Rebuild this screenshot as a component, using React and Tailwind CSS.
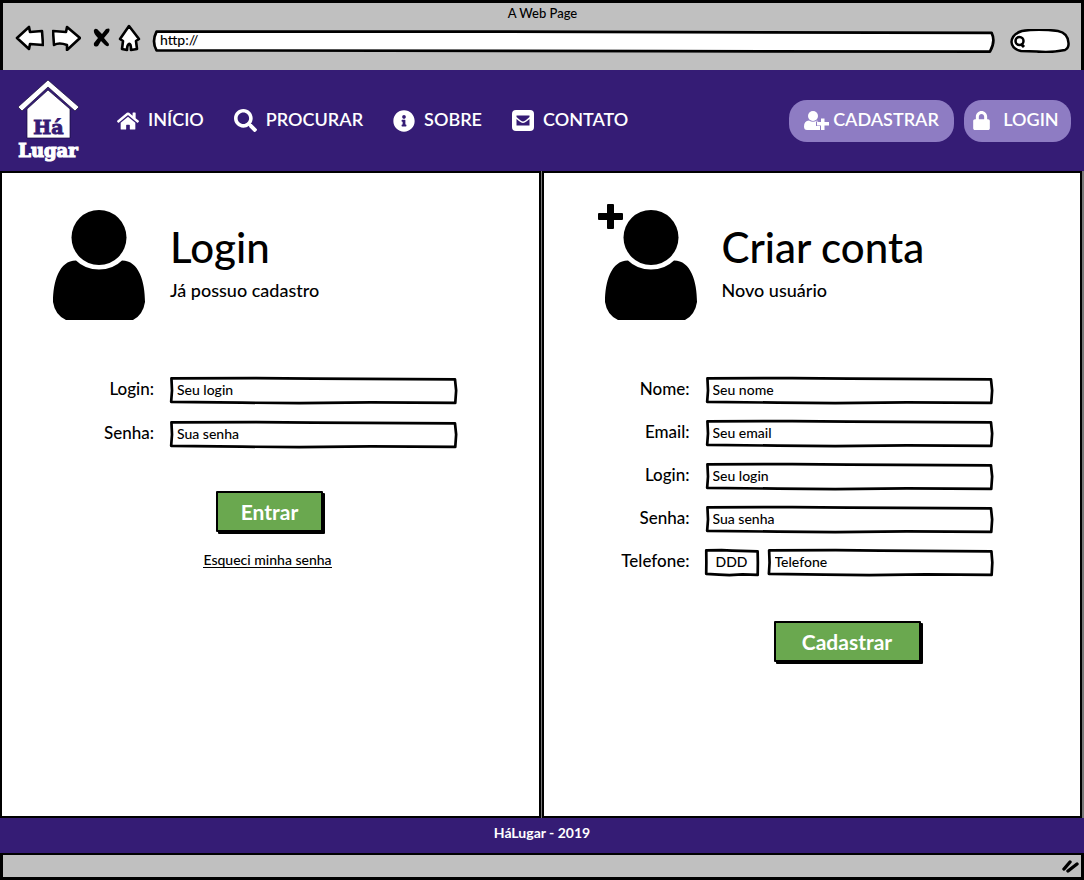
import React from "react";
import { FaHome, FaInfoCircle, FaLock, FaSearch } from "react-icons/fa";

function SketchFrame({ tilt = false }) {
  return (
    <svg
      className="pointer-events-none absolute inset-0 h-full w-full overflow-visible"
      viewBox="0 0 100 100"
      preserveAspectRatio="none"
      aria-hidden="true"
    >
      <path
        d={
          tilt
            ? "M.3 3 L40 3 L99.6 9 Q100.1 50 99.4 98 L60 96 L.3 92 Q-.3 50 .3 3 Z"
            : "M.5 5 L30 4 L50 6 L99.3 9 L99.7 50 L99.4 96 L70 94 L45 97 L25 95 L.4 92 L.7 50 Z"
        }
        fill="#fff"
        stroke="#000"
        strokeWidth="2.7"
        strokeLinejoin="round"
        vectorEffect="non-scaling-stroke"
      />
    </svg>
  );
}

function TextField({ id, placeholder, type = "text", className = "", center = false, label }) {
  return (
    <div className={"relative h-[27px] " + className}>
      <SketchFrame />
      <input
        id={id}
        type={type}
        aria-label={label}
        placeholder={placeholder}
        className={
          "relative block h-full w-full bg-transparent pb-[2px] text-sm text-black outline-none placeholder:text-black placeholder:opacity-100 " +
          (center ? "text-center" : "px-[7px]")
        }
      />
    </div>
  );
}

function Row({ id, label, children }) {
  return (
    <div className="flex items-start gap-4">
      <label htmlFor={id} className="w-[85px] shrink-0 text-right text-[17px] leading-[23px]">
        {label}
      </label>
      {children}
    </div>
  );
}

function Avatar({ plus = false }) {
  return (
    <div className="relative h-[110px] w-[92px] shrink-0">
      <svg viewBox="0 0 92 110" className="h-full w-full" aria-hidden="true">
        <circle cx="46" cy="27.5" r="27.5" />
        <path d="M23 50.500Q32 59.500 46 59.500T69 50.500C86 50.500 92 72 92 92Q90 105 80 110H13Q2 105 0 92C0 72 6 50.500 23 50.500Z" />
      </svg>
      {plus && (
        <svg viewBox="0 0 25 25" className="absolute -left-[7px] -top-[6px] h-[25px] w-[25px]" aria-hidden="true">
          <path d="M10 0h5q1 0 1 1v8h8q1 0 1 1v5q0 1-1 1h-8v8q0 1-1 1h-5q-1 0-1-1v-8H1q-1 0-1-1v-5q0-1 1-1h8V1q0-1 1-1z" />
        </svg>
      )}
    </div>
  );
}

function PanelHeading({ title, subtitle, plus }) {
  return (
    <div className="flex items-start gap-[25px]">
      <Avatar plus={plus} />
      <div className="pt-[13px]">
        <h1 className="text-[42px] leading-[48px]">{title}</h1>
        <p className="mt-[7px] text-lg leading-6">{subtitle}</p>
      </div>
    </div>
  );
}

function ActionButton({ children, className }) {
  return (
    <button
      type="submit"
      className={
        "h-[41px] rounded-[1px] border-2 border-black bg-[#6aa84f] text-[21px] font-bold text-white shadow-[2px_2px_0_#000] " +
        className
      }
    >
      {children}
    </button>
  );
}

function Logo() {
  return (
    <a href="#inicio" aria-label="Há Lugar" className="block w-[64px] shrink-0">
      <svg viewBox="0 0 64 84" className="h-[84px] w-[64px]">
        <path d="M1 28L31 1L62 28L58 32L31 8L5 32Z" fill="#fff" stroke="#160a3a" strokeWidth=".7" />
        <path d="M31 11L53 30V59H10V30Z" fill="#fff" stroke="#160a3a" strokeWidth=".7" />
        <text x="31.500" y="55" textAnchor="middle" fontFamily="DejaVu Serif, serif" fontWeight="700" fontSize="19" fill="#351c75" stroke="#351c75" strokeWidth="1">
          Há
        </text>
        <text x="31" y="78" textAnchor="middle" fontFamily="DejaVu Serif, serif" fontWeight="700" fontSize="18" fill="#fff" stroke="#fff" strokeWidth="1.200">
          Lugar
        </text>
      </svg>
    </a>
  );
}

function MailIcon() {
  return (
    <svg viewBox="0 0 22 21" className="h-[21px] w-[22px]" aria-hidden="true">
      <rect width="22" height="21" rx="4" fill="#fff" />
      <path d="M4.500 5.500h13v1.500q-5 4.500-6.500 4.500t-6.500-4.500zM4.500 9q4.500 4 6.500 4t6.500-4v6.500h-13z" fill="#351c75" />
    </svg>
  );
}

function UserPlusIcon() {
  return (
    <svg viewBox="0 0 25 19" className="h-[19px] w-[25px]" fill="#fff" aria-hidden="true">
      <circle cx="9" cy="5" r="5" />
      <path d="M5 9.500q4 2.500 8 0l1.500 1H12v4.500h4V19H3Q0 19 0 15.500Q0 10 5 9.500Z" />
      <path d="M17 7.500h3.500V11H25v3.500h-4.500V19H17v-4.500h-4V11h4Z" />
    </svg>
  );
}

function NavLink({ href, icon, children }) {
  return (
    <a href={href} className="flex items-center gap-[9px]">
      {icon}
      <span className="pb-1">{children}</span>
    </a>
  );
}

const toolbarIcon = "fill-white stroke-black stroke-[2.6]";

function BrowserBar() {
  return (
    <header className="flex h-[70px] flex-col border-x-[3px] border-t-[3px] border-black bg-[#c0c0c0] pl-3 pr-[11px]">
      <p className="pt-px text-center text-[13px] leading-[18px]">A Web Page</p>
      <div className="flex items-center">
        <button type="button" aria-label="Voltar" className="mr-2">
          <svg viewBox="0 0 29 26" className={"h-[26px] w-[29px] " + toolbarIcon} strokeLinejoin="round">
            <path d="M2 13L14 2L15 7L27 6L28 20L15 19L14 24Z" />
          </svg>
        </button>
        <button type="button" aria-label="Avançar" className="mr-3">
          <svg viewBox="0 0 29 26" className={"h-[26px] w-[29px] " + toolbarIcon} strokeLinejoin="round">
            <path d="M1 6L14 7L15 2L28 13L15 25L15 20Q7 17 2 20Z" />
          </svg>
        </button>
        <button type="button" aria-label="Parar" className="mr-2">
          <svg viewBox="0 0 17 20" className="h-[20px] w-[17px]">
            <path d="M1 2Q3-1 6 3L9 6L13 1Q18-1 16 4L11 10L16 16Q16 20 12 17L8 13L5 18Q0 20 1 15L5 10Q0 5 1 2Z" />
          </svg>
        </button>
        <button type="button" aria-label="Página inicial" className="mr-[13px]">
          <svg viewBox="0 0 23 28" className={"h-[28px] w-[23px] " + toolbarIcon} strokeLinejoin="round">
            <path d="M11 2L21 15L18 17L19 25L13 26Q13 19 11 20T9 26L4 25L5 17L2 15Z" />
          </svg>
        </button>
        <div className="relative mt-[7px] h-[21px] grow">
          <SketchFrame tilt />
          <input
            aria-label="Endereço"
            defaultValue="http://"
            className="relative block h-full w-full bg-transparent px-[6px] pb-[3px] text-sm leading-4 outline-none"
          />
        </div>
        <div className="relative ml-[15px] mt-[7px] h-[24px] w-[60px]">
          <svg viewBox="0 0 60 24" className="absolute inset-0 h-full w-full" aria-hidden="true">
            <path d="M12 2Q28-.5 48 2Q58 4 58.500 14Q59 19 55 21Q40 24 27 22.500L11 22Q2 20 1.500 13Q2 5 12 2Z" fill="#fff" stroke="#000" strokeWidth="2.500" />
            <circle cx="9.500" cy="12" r="4" fill="none" stroke="#000" strokeWidth="2.500" />
            <path d="M11 15L14 18" stroke="#000" strokeWidth="3" />
          </svg>
          <input aria-label="Pesquisar" className="relative block h-full w-full bg-transparent pl-5 pr-2 text-xs outline-none" />
        </div>
      </div>
    </header>
  );
}

export default function App() {
  return (
    <div className="flex min-h-screen flex-col bg-white font-['Lato',sans-serif] font-medium text-black">
      <BrowserBar />

      <nav className="flex h-[101px] items-center bg-[#351c75] pl-[17px] pr-[13px] text-lg font-semibold text-white">
        <Logo />
        <div className="ml-9 flex grow items-center gap-[30px]">
          <NavLink href="#inicio" icon={<FaHome size={22} />}>INÍCIO</NavLink>
          <NavLink href="#procurar" icon={<FaSearch size={23} />}>PROCURAR</NavLink>
          <NavLink href="#sobre" icon={<FaInfoCircle size={22} />}>SOBRE</NavLink>
          <NavLink href="#contato" icon={<MailIcon />}>CONTATO</NavLink>
        </div>
        <div className="flex items-center gap-[10px]">
          <button type="button" className="flex h-[42px] w-[165px] items-center justify-center gap-1 rounded-[18px] bg-[#8e7cc3]">
            <UserPlusIcon />
            <span className="pb-1">CADASTRAR</span>
          </button>
          <button type="button" className="flex h-[42px] w-[107px] items-center justify-center gap-3 rounded-[18px] bg-[#8e7cc3] pr-1">
            <FaLock size={19} />
            <span className="pb-1">LOGIN</span>
          </button>
        </div>
      </nav>

      <main className="grid grow grid-cols-2 gap-px bg-[#777] pr-[2px]">
        <section className="border-2 border-black bg-white pl-[51px] pr-4 pt-[37px]">
          <PanelHeading title="Login" subtitle="Já possuo cadastro" />
          <form className="mt-[57px]" onSubmit={(e) => e.preventDefault()}>
            <div className="ml-4 flex flex-col gap-[17px]">
              <Row id="login" label="Login:">
                <TextField id="login" placeholder="Seu login" className="w-[287px]" />
              </Row>
              <Row id="senha" label="Senha:">
                <TextField id="senha" type="password" placeholder="Sua senha" className="w-[287px]" />
              </Row>
            </div>
            <div className="ml-[151px] mt-[43px] flex w-[127px] flex-col items-center">
              <ActionButton className="ml-1 w-[107px]">Entrar</ActionButton>
              <a href="#recuperar" className="mt-5 whitespace-nowrap border-b border-black text-sm leading-[15px]">
                Esqueci minha senha
              </a>
            </div>
          </form>
        </section>

        <section className="border-2 border-black bg-white pl-[61px] pr-4 pt-[37px]">
          <PanelHeading title="Criar conta" subtitle="Novo usuário" plus />
          <form className="mt-[57px]" onSubmit={(e) => e.preventDefault()}>
            <div className="flex flex-col gap-4">
              <Row id="nome" label="Nome:">
                <TextField id="nome" placeholder="Seu nome" className="w-[287px]" />
              </Row>
              <Row id="email" label="Email:">
                <TextField id="email" type="email" placeholder="Seu email" className="w-[287px]" />
              </Row>
              <Row id="novo-login" label="Login:">
                <TextField id="novo-login" placeholder="Seu login" className="w-[287px]" />
              </Row>
              <Row id="nova-senha" label="Senha:">
                <TextField id="nova-senha" type="password" placeholder="Sua senha" className="w-[287px]" />
              </Row>
              <Row id="telefone" label="Telefone:">
                <div className="flex w-[287px] gap-[10px]">
                  <TextField id="ddd" label="DDD" placeholder="DDD" className="w-[52px]" center />
                  <TextField id="telefone" type="tel" placeholder="Telefone" className="grow" />
                </div>
              </Row>
            </div>
            <ActionButton className="ml-[169px] mt-[45px] w-[147px]">Cadastrar</ActionButton>
          </form>
        </section>
      </main>

      <footer>
        <p className="h-[35px] bg-[#351c75] text-center text-sm font-bold leading-[30px] text-white">
          HáLugar - 2019
        </p>
        <div className="flex h-[27px] items-center justify-end border-x-[3px] border-b-[3px] border-t-2 border-black bg-[#c0c0c0] pr-[2px]">
          <svg viewBox="0 0 17 14" className="h-[14px] w-[17px]" stroke="#000" strokeWidth="3.400" strokeLinecap="round" aria-hidden="true">
            <path d="M2 10L8 3M6 12L15 5" />
          </svg>
        </div>
      </footer>
    </div>
  );
}
